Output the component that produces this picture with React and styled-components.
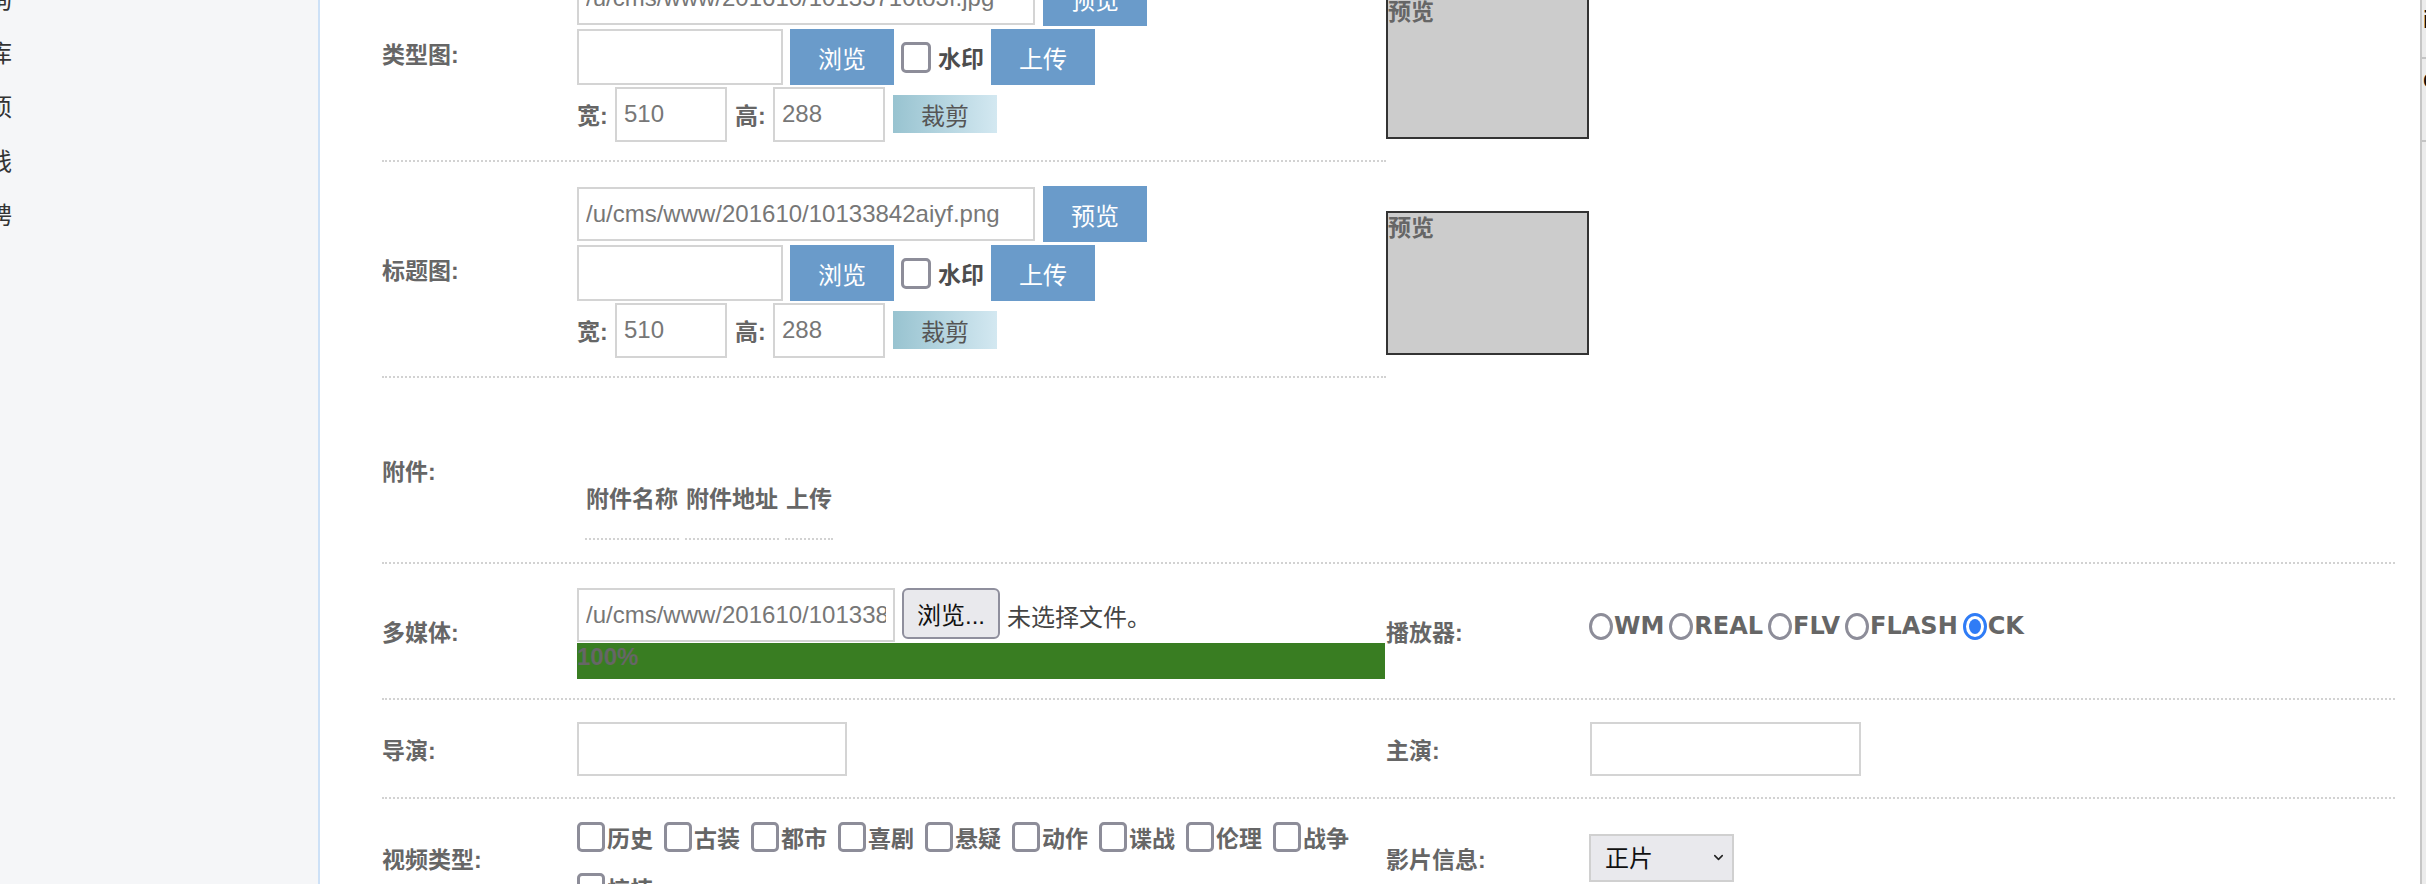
import React from "react";
import styled, { createGlobalStyle } from "styled-components";
import { ChevronDown } from "lucide-react";

const labelGray = "#666666";
const inputBorder = "#d4d4d4";
const dottedLine = "2px dotted #d2d2d2";
const btnBlue = "#6a9bca";
const sansStack = `"Liberation Sans", "Noto Sans CJK SC", sans-serif`;

const GlobalStyle = createGlobalStyle`
  html, body {
    margin: 0;
    padding: 0;
    background: #fff;
  }
  body {
    font-family: ${sansStack};
    overflow: hidden;
  }
`;

const Page = styled.div`
  display: flex;
  width: 2426px;
  height: 884px;
  overflow: hidden;
`;

/* left menu, scrolled sideways so only the tail of each entry shows */
const Sidebar = styled.aside`
  flex: 0 0 318px;
  background: #f5f6f8;
  border-right: 2px solid #cde1f7;
  display: flex;
  flex-direction: column;
  margin-top: -30px;
`;

const MenuItem = styled.div`
  display: flex;
  justify-content: flex-end;
  align-items: center;
  width: 12px;
  height: 54px;
  white-space: nowrap;
  font-size: 24px;
  color: #333;
`;

const Main = styled.main`
  flex: 1;
  min-width: 0;
  padding: 0 25px 0 62px;
  margin-top: -54px;
`;

const Row = styled.div`
  display: grid;
  grid-template-columns: 194px 810px 203px 1fr;
  height: ${({ $h }) => $h}px;
  box-sizing: border-box;
  border-bottom: ${({ $split }) => ($split ? "none" : dottedLine)};
`;

const LeftHalf = styled.div`
  grid-column: 1 / 3;
  display: grid;
  grid-template-columns: 194px 810px;
  border-bottom: ${dottedLine};
`;

const Label = styled.div`
  display: flex;
  align-items: center;
  font-size: 23px;
  font-weight: 700;
  color: ${labelGray};
  white-space: nowrap;
`;

const Field = styled.div`
  display: flex;
  flex-direction: column;
  align-items: flex-start;
  justify-content: ${({ $center }) => ($center ? "center" : "flex-start")};
  padding: ${({ $pad = "0" }) => $pad};
  padding-left: 1px;
`;

const Line = styled.div`
  display: flex;
  align-items: center;
  height: ${({ $h }) => $h}px;
  margin-top: ${({ $mt = 0 }) => $mt}px;
  gap: ${({ $gap = 8 }) => $gap}px;
`;

const TextInput = styled.input.attrs({ type: "text", readOnly: true })`
  box-sizing: border-box;
  width: ${({ $w }) => $w}px;
  height: ${({ $h = 56 }) => $h}px;
  border: 2px solid ${inputBorder};
  padding: 0 7px;
  margin: 0;
  font-family: "Liberation Sans", Arial, sans-serif;
  font-size: 24px;
  color: #777;
  background: #fff;
  outline: none;
`;

const BlueButton = styled.button`
  box-sizing: border-box;
  width: ${({ $w = 104 }) => $w}px;
  height: 56px;
  border: none;
  margin: 0;
  padding: 0;
  background: ${btnBlue};
  color: #fff;
  font-family: ${sansStack};
  font-size: 24px;
`;

const CropButton = styled.button`
  box-sizing: border-box;
  width: 104px;
  height: 38px;
  border: none;
  margin: 0 0 0 6px;
  padding: 0;
  background: linear-gradient(to right, #98c3d0, #d3e8f1);
  color: #555;
  font-family: ${sansStack};
  font-size: 24px;
`;

const CheckBox = styled.span`
  box-sizing: border-box;
  display: inline-block;
  flex: 0 0 auto;
  width: ${({ $w = 30 }) => $w}px;
  height: ${({ $h = 31 }) => $h}px;
  border: 3px solid #8d8d99;
  border-radius: 5px;
  background: #fff;
`;

const CheckText = styled.span`
  font-size: 23px;
  font-weight: 700;
  color: ${({ $dark }) => ($dark ? "#4d4d4d" : labelGray)};
  white-space: nowrap;
`;

const InlineLabel = styled.span`
  font-size: 23px;
  font-weight: 700;
  color: ${labelGray};
  white-space: nowrap;
  width: 36px;
  margin-left: ${({ $ml = 0 }) => $ml}px;
`;

const PreviewCell = styled.div`
  grid-column: 3 / 5;
  padding-top: 49px;
`;

const PreviewBox = styled.div`
  box-sizing: border-box;
  width: 203px;
  height: 144px;
  background: #cccccc;
  border: 2px solid #333;
  font-size: 23px;
  font-weight: 700;
  color: ${labelGray};
  line-height: 30px;
`;

const AttachTable = styled.table`
  border-collapse: separate;
  border-spacing: 6px 4px;
  margin-left: 2px;
`;

const AttachHead = styled.th`
  padding: 0 1px;
  height: 30px;
  text-align: left;
  font-size: 23px;
  font-weight: 700;
  color: ${labelGray};
  white-space: nowrap;
`;

const AttachCell = styled.td`
  height: 20px;
  padding: 0;
  border-bottom: ${dottedLine};
`;

const FileButton = styled.button`
  box-sizing: border-box;
  width: 98px;
  height: 51px;
  padding: 0;
  margin: 1px 0 0;
  background: #e9e9ed;
  border: 2px solid #8f8f9d;
  border-radius: 6px;
  color: #111;
  font-family: ${sansStack};
  font-size: 24px;
  align-self: flex-start;
`;

const FileNote = styled.span`
  font-size: 24px;
  color: #444;
  white-space: nowrap;
`;

const Progress = styled.div`
  width: 808px;
  height: 36px;
  background: #e6e6e6;
`;

const ProgressFill = styled.div`
  height: 100%;
  background: #397d22;
  font-family: "Liberation Sans", Arial, sans-serif;
  font-size: 24px;
  font-weight: 700;
  color: ${labelGray};
  line-height: 28px;
`;

const RadioGroup = styled.div`
  display: flex;
  align-items: center;
  gap: 5px;
  padding-bottom: 10px;
`;

const RadioOption = styled.label`
  display: flex;
  align-items: center;
  gap: 1px;
  font-family: "DejaVu Sans", sans-serif;
  font-size: 24px;
  font-weight: 700;
  color: ${labelGray};
`;

const RadioMark = styled.span`
  position: relative;
  flex: 0 0 auto;
  box-sizing: border-box;
  width: 24px;
  height: 27px;
  border-radius: 50%;
  border: 3px solid ${({ $on }) => ($on ? "#2f7cf6" : "#8d8d99")};
  background: #fff;

  &::after {
    content: "";
    display: ${({ $on }) => ($on ? "block" : "none")};
    position: absolute;
    left: 3px;
    right: 3px;
    top: 3px;
    bottom: 3px;
    border-radius: 50%;
    background: #2f7cf6;
  }
`;

const CheckList = styled.div`
  display: flex;
  flex-wrap: wrap;
  column-gap: 11px;
  row-gap: 7px;
  padding-top: 23px;
  padding-left: 1px;
`;

const CheckItem = styled.label`
  display: flex;
  align-items: center;
  gap: 2px;
  height: 30px;
`;

const SelectCell = styled.div`
  display: flex;
  align-items: center;
`;

const SelectWrap = styled.div`
  position: relative;
  width: 145px;
  height: 48px;
`;

const Select = styled.select`
  appearance: none;
  box-sizing: border-box;
  width: 100%;
  height: 100%;
  margin: 0;
  padding: 0 0 0 14px;
  background: #e9e9ed;
  border: 2px solid #d0d0d0;
  border-radius: 0;
  font-family: ${sansStack};
  font-size: 24px;
  color: #111;
`;

const SelectArrow = styled.span`
  position: absolute;
  right: 8px;
  top: 16px;
  display: flex;
  color: #222;
  pointer-events: none;
`;

const RightPanel = styled.aside`
  flex: 0 0 4px;
  border-left: 2px solid #c6c6c6;
  background: #ececec;
  overflow: hidden;
`;

const PanelItem = styled.div`
  height: ${({ $h }) => $h}px;
  border-bottom: 2px solid #c4c4c4;
  padding: 6px 0 0 1px;
  font-size: 24px;
  font-weight: 700;
  color: #111;
  white-space: nowrap;
  box-sizing: border-box;
`;

const menu = ["信息咨询", "资源库", "选项", "在线", "招聘"];
const videoTypes = ["历史", "古装", "都市", "喜剧", "悬疑", "动作", "谍战", "伦理", "战争", "惊悚"];
const players = [
  { name: "WM" },
  { name: "REAL" },
  { name: "FLV" },
  { name: "FLASH" },
  { name: "CK", on: true }
];

const ImageRow = ({ label, path }) => (
  <Row $split $h={216}>
    <LeftHalf>
      <Label>{label}:</Label>
      <Field $pad="24px 0 0">
        <Line $h={56}>
          <TextInput $w={458} $h={54} value={path} />
          <BlueButton>预览</BlueButton>
        </Line>
        <Line $h={58} $mt={2} $gap={7}>
          <TextInput $w={206} value="" />
          <BlueButton>浏览</BlueButton>
          <CheckBox />
          <CheckText $dark>水印</CheckText>
          <BlueButton>上传</BlueButton>
        </Line>
        <Line $h={56} $gap={2}>
          <InlineLabel>宽:</InlineLabel>
          <TextInput $w={112} $h={55} value="510" />
          <InlineLabel $ml={6}>高:</InlineLabel>
          <TextInput $w={112} $h={55} value="288" />
          <CropButton>裁剪</CropButton>
        </Line>
      </Field>
    </LeftHalf>
    <PreviewCell>
      <PreviewBox>预览</PreviewBox>
    </PreviewCell>
  </Row>
);

export default function App() {
  return (
    <>
      <GlobalStyle />
      <Page>
        <Sidebar>
          {menu.map((m) => (
            <MenuItem key={m}>{m}</MenuItem>
          ))}
        </Sidebar>

        <Main>
          <ImageRow label="类型图" path="/u/cms/www/201610/10133710to3f.jpg" />
          <ImageRow label="标题图" path="/u/cms/www/201610/10133842aiyf.png" />

          <Row $h={186}>
            <Label>附件:</Label>
            <Field $pad="98px 0 0">
              <AttachTable>
                <thead>
                  <tr>
                    <AttachHead>附件名称</AttachHead>
                    <AttachHead>附件地址</AttachHead>
                    <AttachHead>上传</AttachHead>
                  </tr>
                </thead>
                <tbody>
                  <tr>
                    <AttachCell />
                    <AttachCell />
                    <AttachCell />
                  </tr>
                </tbody>
              </AttachTable>
            </Field>
            <div />
            <div />
          </Row>

          <Row $h={136}>
            <Label>多媒体:</Label>
            <Field $pad="23px 0 0">
              <Line $h={56} $gap={7}>
                <TextInput
                  $w={318}
                  $h={54}
                  style={{ alignSelf: "flex-start", marginTop: 1 }}
                  value="/u/cms/www/201610/10133887x6a2.mp4"
                />
                <FileButton>浏览...</FileButton>
                <FileNote>未选择文件。</FileNote>
              </Line>
              <Progress>
                <ProgressFill style={{ width: "100%" }}>100%</ProgressFill>
              </Progress>
            </Field>
            <Label>播放器:</Label>
            <RadioGroup>
              {players.map((p) => (
                <RadioOption key={p.name}>
                  <RadioMark $on={p.on} />
                  {p.name}
                </RadioOption>
              ))}
            </RadioGroup>
          </Row>

          <Row $h={99}>
            <Label>导演:</Label>
            <Field $center>
              <TextInput $w={270} $h={54} value="" />
            </Field>
            <Label>主演:</Label>
            <Field $center>
              <TextInput $w={271} $h={54} value="" />
            </Field>
          </Row>

          <Row $h={120}>
            <Label>视频类型:</Label>
            <CheckList>
              {videoTypes.map((t) => (
                <CheckItem key={t}>
                  <CheckBox $w={28} $h={30} />
                  <CheckText>{t}</CheckText>
                </CheckItem>
              ))}
            </CheckList>
            <Label>影片信息:</Label>
            <SelectCell>
              <SelectWrap>
                <Select defaultValue="正片">
                  <option>正片</option>
                  <option>预告片</option>
                  <option>花絮</option>
                </Select>
                <SelectArrow>
                  <ChevronDown size={15} strokeWidth={2.5} />
                </SelectArrow>
              </SelectWrap>
            </SelectCell>
          </Row>
        </Main>

        <RightPanel>
          <PanelItem $h={59}>insert</PanelItem>
          <PanelItem $h={83}>delete</PanelItem>
        </RightPanel>
      </Page>
    </>
  );
}
